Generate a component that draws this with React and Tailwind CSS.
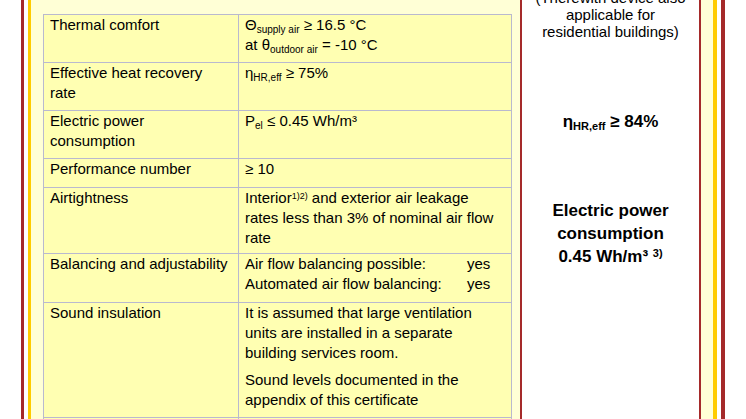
import React from "react";

const Row = ({ h, left, children }) => (
  <div className={`grid grid-cols-[195px_1fr] border-b border-[#b9b9cf] ${h}`}>
    <div className="border-r border-[#b9b9cf] pl-[6px]">{left}</div>
    <div className="pl-[6px]">{children}</div>
  </div>
);

export default function App() {
  return (
    <div className="w-[746px] h-[419px] overflow-hidden bg-white font-['Liberation_Sans',Arial,sans-serif] text-black">
      <div className="mx-[21px] h-full border-l-[3px] border-r-[4px] border-[#a52a2a] bg-white px-[4px]">
        <div className="flex h-full gap-[8px] border-l-[3px] border-r-[4px] border-[#ffcc00] bg-[#ffffd6] px-[12px]">
          {/* table */}
          <div className="w-[469px] shrink-0 pt-[14px]">
            <div className="border-t border-x border-[#b9b9cf] bg-[#ffffb2] text-[15px] leading-[20px]">
              <Row h="h-[48px]" left="Thermal comfort">
                <div>
                  Θ<sub className="text-[10px]">supply air</sub> ≥ 16.5 °C
                </div>
                <div>
                  at θ<sub className="text-[10px]">outdoor air</sub> = -10 °C
                </div>
              </Row>
              <Row
                h="h-[48px]"
                left={
                  <>
                    Effective heat recovery
                    <br />
                    rate
                  </>
                }
              >
                η<sub className="text-[10px]">HR,eff</sub> ≥ 75%
              </Row>
              <Row
                h="h-[48px]"
                left={
                  <>
                    Electric power
                    <br />
                    consumption
                  </>
                }
              >
                P<sub className="text-[10px]">el</sub> ≤ 0.45 Wh/m³
              </Row>
              <Row h="h-[29px]" left="Performance number">
                ≥ 10
              </Row>
              <Row h="h-[66px]" left="Airtightness">
                Interior<sup className="text-[9px]">1)2)</sup> and exterior air leakage
                <br />
                rates less than 3% of nominal air flow
                <br />
                rate
              </Row>
              <Row h="h-[49px]" left="Balancing and adjustability">
                <div className="flex">
                  <span className="w-[222px]">Air flow balancing possible:</span>
                  <span>yes</span>
                </div>
                <div className="flex">
                  <span className="w-[222px]">Automated air flow balancing:</span>
                  <span>yes</span>
                </div>
              </Row>
              <Row h="h-[115px]" left="Sound insulation">
                <div>
                  It is assumed that large ventilation
                  <br />
                  units are installed in a separate
                  <br />
                  building services room.
                </div>
                <div className="mt-[7px]">
                  Sound levels documented in the
                  <br />
                  appendix of this certificate
                </div>
              </Row>
              <Row h="h-[40px]" left="" />
            </div>
          </div>
          {/* right box */}
          <div className="w-[181px] shrink-0 border-x-2 border-[#a52a2a] bg-white text-center">
            <div className="mt-[-11px] text-[15px] leading-[17px]">
              (Therewith device also
              <br />
              applicable for
              <br />
              residential buildings)
            </div>
            <div className="mt-[70px] text-[17px] font-bold leading-[23px]">
              η<sub className="text-[11px]">HR,eff</sub> ≥ 84%
            </div>
            <div className="mt-[66px] text-[17px] font-bold leading-[23px]">
              Electric power
              <br />
              consumption
              <br />
              0.45 Wh/m³ <sup className="text-[11px]">3)</sup>
            </div>
          </div>
        </div>
      </div>
    </div>
  );
}
